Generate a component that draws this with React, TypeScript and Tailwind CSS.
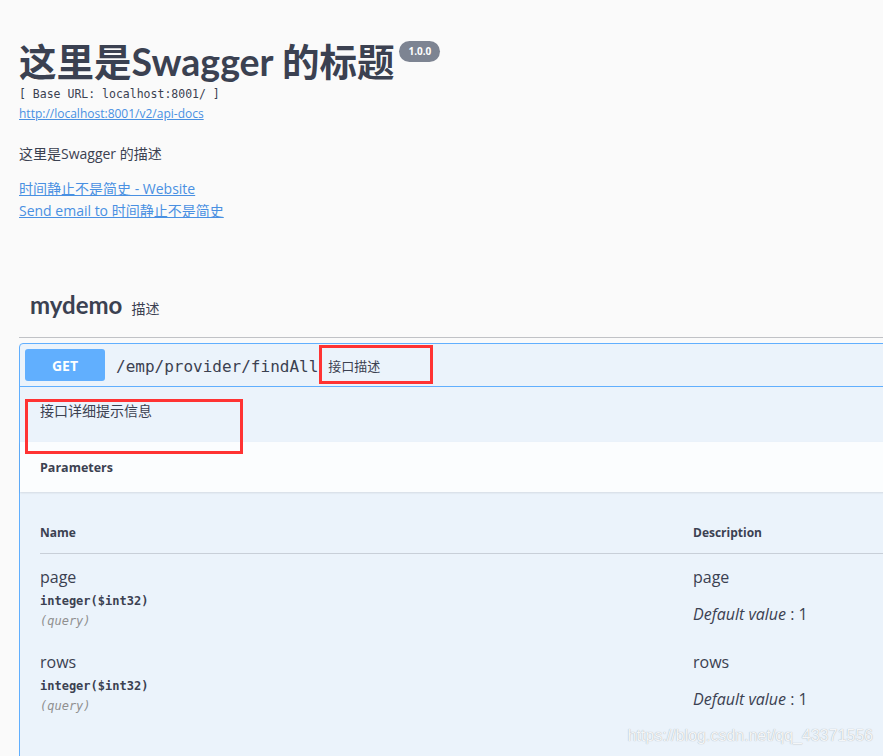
import React from "react";

const sans = "font-['Open_Sans','Noto_Sans_CJK_SC',sans-serif]";
const head = "font-['Lato','Noto_Sans_CJK_SC',sans-serif]";
const mono = "font-['DejaVu_Sans_Mono','Liberation_Mono',monospace]";

const params = [
  { name: "page", type: "integer($int32)", where: "(query)", def: "1" },
  { name: "rows", type: "integer($int32)", where: "(query)", def: "1" },
];

function ParamRow({ p }: { p: (typeof params)[number] }) {
  return (
    <div className="grid grid-cols-[653px_1fr] pt-[11px] pb-[8px]">
      <div>
        <div className="text-[16px] leading-[24px]">{p.name}</div>
        <div className={`${mono} mt-[2px] text-[12px] leading-[20px] font-semibold`}>{p.type}</div>
        <div className={`${mono} text-[12px] leading-[20px] italic text-[#909090]`}>{p.where}</div>
      </div>
      <div>
        <div className="text-[16px] leading-[24px]">{p.name}</div>
        <div className="mt-[13px] text-[16px] leading-[24px]">
          <i>Default value</i> : {p.def}
        </div>
      </div>
    </div>
  );
}

export default function App() {
  return (
    <div className={`${sans} relative h-[756px] w-full overflow-hidden bg-[#fafafa] text-[#3b4151]`}>
      <div className="w-[940px] pl-[19px] pt-[40px]">
        {/* info */}
        <div className="flex items-start">
          <h2 className={`${head} text-[37.5px] leading-[44px] font-bold`}>这里是Swagger 的标题</h2>
          <span className="ml-[5px] mt-[1px] rounded-full bg-[#7d8492] px-[9px] py-[2px] text-[10px] leading-[17px] font-bold text-white">
            1.0.0
          </span>
        </div>
        <div className={`${mono} mt-[1px] text-[11.5px] leading-[18px]`}>[ Base URL: localhost:8001/ ]</div>
        <a className="block mt-[2px] text-[12px] leading-[18px] text-[#4990e2] underline">
          http://localhost:8001/v2/api-docs
        </a>
        <p className="mt-[21px] text-[14px] leading-[20px]">这里是Swagger 的描述</p>
        <div className="mt-[14px] text-[14px] leading-[22px] text-[#4990e2]">
          <a className="block underline">时间静止不是简史 - Website</a>
          <a className="block underline">Send email to 时间静止不是简史</a>
        </div>

        {/* tag */}
        <div className="mt-[68px] flex items-baseline border-b border-[rgba(59,65,81,0.3)] pb-[17px] pl-[11px]">
          <h3 className={`${head} text-[24px] leading-[30px] font-bold`}>mydemo</h3>
          <span className="ml-[9px] text-[14px]">描述</span>
        </div>

        {/* operation */}
        <div className="relative mt-[5px] rounded-[4px] border border-[#61affe] bg-[#ebf3fb]">
          <div className="flex items-center border-b border-[#61affe] p-[5px]">
            <span className="flex h-[32px] w-[80px] items-center justify-center rounded-[3px] bg-[#61affe] text-[14px] font-bold text-white">
              GET
            </span>
            <span className={`${mono} ml-[11px] mt-[3px] text-[16px]`}>/emp/provider/findAll</span>
            <span className="ml-[10px] mt-[3px] text-[13px]">接口描述</span>
          </div>
          <div className="px-[20px] pt-[14px] pb-[21px] text-[14px] leading-[20px]">接口详细提示信息</div>
          <div className="flex h-[50px] items-center bg-white/80 px-[20px] pt-[3px] shadow-[0_1px_2px_rgba(0,0,0,0.1)]">
            <h4 className="text-[12.5px] font-bold">Parameters</h4>
          </div>
          <div className="px-[20px] pt-[31px] pb-[40px]">
            <div className="grid grid-cols-[653px_1fr] border-b border-[rgba(59,65,81,0.2)] pb-[10px] text-[12px] leading-[20px] font-bold">
              <div>Name</div>
              <div>Description</div>
            </div>
            {params.map((p) => (
              <ParamRow key={p.name} p={p} />
            ))}
          </div>

          {/* annotation boxes */}
          <div className="pointer-events-none absolute left-[299px] top-[1px] h-[39px] w-[114px] border-[3px] border-[#ff3333]" />
          <div className="pointer-events-none absolute left-[5px] top-[55px] h-[55px] w-[218px] border-[3px] border-[#ff3333]" />
        </div>
      </div>

      <div className="absolute right-[10px] bottom-[8px] font-['Liberation_Sans',sans-serif] text-[16px] text-[#f4f6f8] [text-shadow:0_0_1px_rgba(0,0,0,0.35)]">
        https://blog.csdn.net/qq_43371556
      </div>
    </div>
  );
}
